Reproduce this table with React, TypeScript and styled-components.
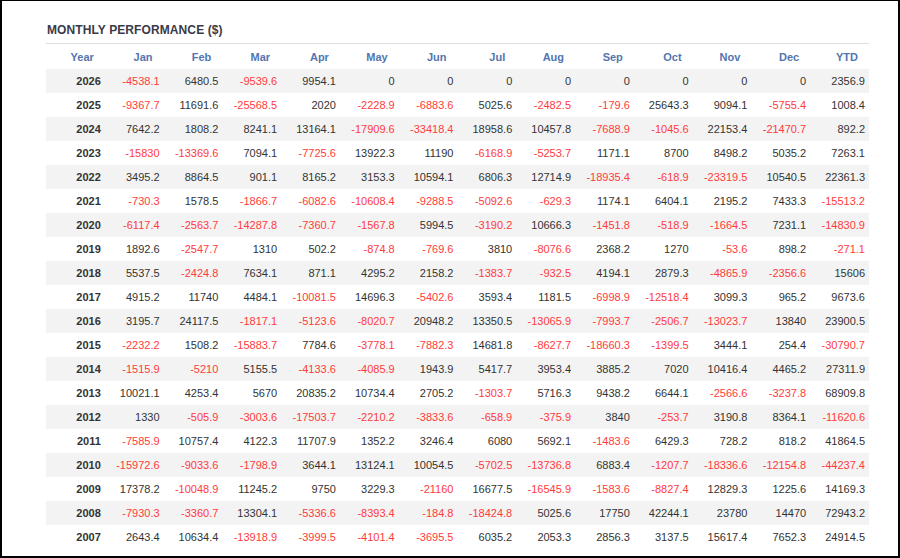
import React from "react";
import styled, { createGlobalStyle } from "styled-components";

const GlobalStyle = createGlobalStyle`
  html, body {
    margin: 0;
    padding: 0;
    background: #ffffff;
  }
  body {
    font-family: "Liberation Sans", Arial, sans-serif;
  }
`;

const Frame = styled.div`
  box-sizing: border-box;
  width: 900px;
  height: 558px;
  border: 2px solid #000;
  border-top-width: 1px;
  padding: 21px 28px 0 44px;
  overflow: hidden;
  background: #fff;
`;

const Title = styled.h3`
  margin: 0 0 5px 1px;
  font-size: 12px;
  line-height: 16px;
  font-weight: bold;
  color: #3a3a48;
  text-transform: uppercase;
  letter-spacing: 0.1px;
`;

const Table = styled.table`
  width: 823px;
  table-layout: fixed;
  border-collapse: collapse;
  border-top: 1px solid #dddddd;
  font-size: 11px;
`;

const HeadCell = styled.th`
  height: 25px;
  padding: 0 11px 0 0;
  text-align: right;
  font-weight: bold;
  color: #5375b0;
  vertical-align: middle;
`;

const Row = styled.tr<{ $shaded: boolean }>`
  height: 24px;
  background: ${({ $shaded }) => ($shaded ? "#f3f3f3" : "#ffffff")};
`;

const YearCell = styled.td`
  padding: 0 4px 0 0;
  text-align: right;
  font-weight: bold;
  color: #333333;
`;

const ValueCell = styled.td<{ $negative: boolean }>`
  padding: 0 4px 0 0;
  text-align: right;
  color: ${({ $negative }) => ($negative ? "#ff3b3b" : "#333333")};
`;

const columns = ["Year", "Jan", "Feb", "Mar", "Apr", "May", "Jun", "Jul", "Aug", "Sep", "Oct", "Nov", "Dec", "YTD"];

const rows: [string, string[]][] = [
  ["2026", ["-4538.1", "6480.5", "-9539.6", "9954.1", "0", "0", "0", "0", "0", "0", "0", "0", "2356.9"]],
  ["2025", ["-9367.7", "11691.6", "-25568.5", "2020", "-2228.9", "-6883.6", "5025.6", "-2482.5", "-179.6", "25643.3", "9094.1", "-5755.4", "1008.4"]],
  ["2024", ["7642.2", "1808.2", "8241.1", "13164.1", "-17909.6", "-33418.4", "18958.6", "10457.8", "-7688.9", "-1045.6", "22153.4", "-21470.7", "892.2"]],
  ["2023", ["-15830", "-13369.6", "7094.1", "-7725.6", "13922.3", "11190", "-6168.9", "-5253.7", "1171.1", "8700", "8498.2", "5035.2", "7263.1"]],
  ["2022", ["3495.2", "8864.5", "901.1", "8165.2", "3153.3", "10594.1", "6806.3", "12714.9", "-18935.4", "-618.9", "-23319.5", "10540.5", "22361.3"]],
  ["2021", ["-730.3", "1578.5", "-1866.7", "-6082.6", "-10608.4", "-9288.5", "-5092.6", "-629.3", "1174.1", "6404.1", "2195.2", "7433.3", "-15513.2"]],
  ["2020", ["-6117.4", "-2563.7", "-14287.8", "-7360.7", "-1567.8", "5994.5", "-3190.2", "10666.3", "-1451.8", "-518.9", "-1664.5", "7231.1", "-14830.9"]],
  ["2019", ["1892.6", "-2547.7", "1310", "502.2", "-874.8", "-769.6", "3810", "-8076.6", "2368.2", "1270", "-53.6", "898.2", "-271.1"]],
  ["2018", ["5537.5", "-2424.8", "7634.1", "871.1", "4295.2", "2158.2", "-1383.7", "-932.5", "4194.1", "2879.3", "-4865.9", "-2356.6", "15606"]],
  ["2017", ["4915.2", "11740", "4484.1", "-10081.5", "14696.3", "-5402.6", "3593.4", "1181.5", "-6998.9", "-12518.4", "3099.3", "965.2", "9673.6"]],
  ["2016", ["3195.7", "24117.5", "-1817.1", "-5123.6", "-8020.7", "20948.2", "13350.5", "-13065.9", "-7993.7", "-2506.7", "-13023.7", "13840", "23900.5"]],
  ["2015", ["-2232.2", "1508.2", "-15883.7", "7784.6", "-3778.1", "-7882.3", "14681.8", "-8627.7", "-18660.3", "-1399.5", "3444.1", "254.4", "-30790.7"]],
  ["2014", ["-1515.9", "-5210", "5155.5", "-4133.6", "-4085.9", "1943.9", "5417.7", "3953.4", "3885.2", "7020", "10416.4", "4465.2", "27311.9"]],
  ["2013", ["10021.1", "4253.4", "5670", "20835.2", "10734.4", "2705.2", "-1303.7", "5716.3", "9438.2", "6644.1", "-2566.6", "-3237.8", "68909.8"]],
  ["2012", ["1330", "-505.9", "-3003.6", "-17503.7", "-2210.2", "-3833.6", "-658.9", "-375.9", "3840", "-253.7", "3190.8", "8364.1", "-11620.6"]],
  ["2011", ["-7585.9", "10757.4", "4122.3", "11707.9", "1352.2", "3246.4", "6080", "5692.1", "-1483.6", "6429.3", "728.2", "818.2", "41864.5"]],
  ["2010", ["-15972.6", "-9033.6", "-1798.9", "3644.1", "13124.1", "10054.5", "-5702.5", "-13736.8", "6883.4", "-1207.7", "-18336.6", "-12154.8", "-44237.4"]],
  ["2009", ["17378.2", "-10048.9", "11245.2", "9750", "3229.3", "-21160", "16677.5", "-16545.9", "-1583.6", "-8827.4", "12829.3", "1225.6", "14169.3"]],
  ["2008", ["-7930.3", "-3360.7", "13304.1", "-5336.6", "-8393.4", "-184.8", "-18424.8", "5025.6", "17750", "42244.1", "23780", "14470", "72943.2"]],
  ["2007", ["2643.4", "10634.4", "-13918.9", "-3999.5", "-4101.4", "-3695.5", "6035.2", "2053.3", "2856.3", "3137.5", "15617.4", "7652.3", "24914.5"]],
];

const App = () => {
  return (
    <>
      <GlobalStyle />
      <Frame>
        <Title>Monthly Performance ($)</Title>
        <Table>
          <thead>
            <tr>
              {columns.map((c) => (
                <HeadCell key={c}>{c}</HeadCell>
              ))}
            </tr>
          </thead>
          <tbody>
            {rows.map(([year, values], i) => (
              <Row key={year} $shaded={i % 2 === 0}>
                <YearCell>{year}</YearCell>
                {values.map((v, j) => (
                  <ValueCell key={j} $negative={v.startsWith("-")}>
                    {v}
                  </ValueCell>
                ))}
              </Row>
            ))}
          </tbody>
        </Table>
      </Frame>
    </>
  );
};

export default App;
